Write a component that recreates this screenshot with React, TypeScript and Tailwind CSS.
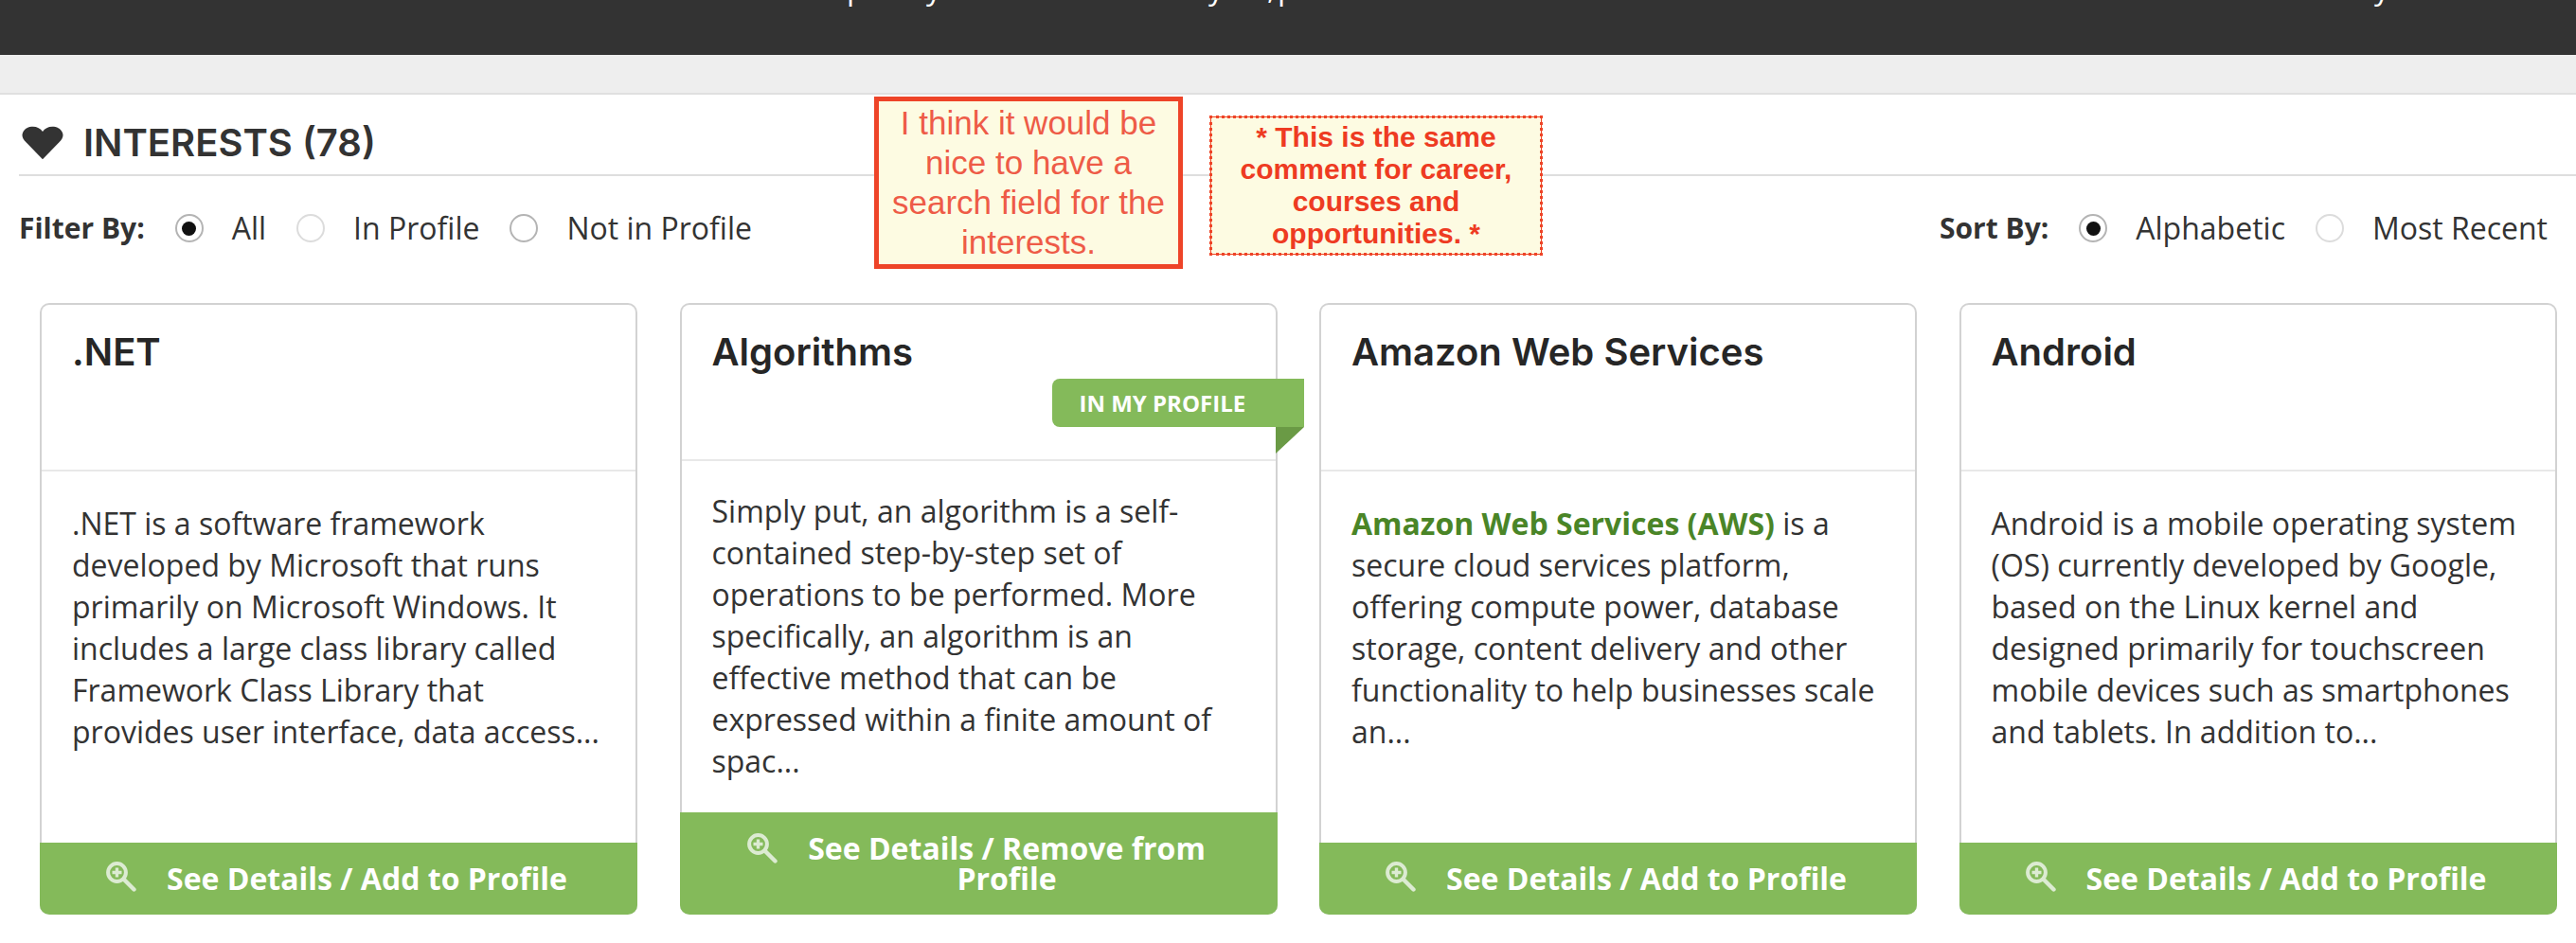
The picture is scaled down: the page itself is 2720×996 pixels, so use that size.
import React from "react";

const Heart = () => (
  <svg viewBox="0 0 24 24" className="w-[44px] h-[36px] shrink-0" preserveAspectRatio="none">
    <path d="M12 23.5 L2.6 11.6 C0.4 9 -0.2 6.8 0.6 4.6 C1.6 1.8 4 0.5 6.4 0.5 C8.8 0.5 10.8 1.8 12 4 C13.2 1.8 15.2 0.5 17.6 0.5 C20 0.5 22.4 1.8 23.4 4.6 C24.2 6.8 23.6 9 21.4 11.6 Z" fill="#333333" />
  </svg>
);

const Zoom = () => (
  <svg viewBox="0 0 32 32" className="w-[32px] h-[32px] shrink-0">
    <circle cx="11.5" cy="11.5" r="9.4" fill="none" stroke="#dcebd2" strokeWidth="4" />
    <path d="M6.5 11.5 H16.5 M11.5 6.5 V16.5" stroke="#dcebd2" strokeWidth="3.4" />
    <path d="M19 19 L29.5 29.5" stroke="#dcebd2" strokeWidth="4.4" strokeLinecap="round" />
  </svg>
);

const Radio = ({ on, light }: { on?: boolean; light?: boolean }) => (
  <span className={`flex items-center justify-center w-[30px] h-[30px] rounded-full border-2 bg-white shrink-0 ${light ? "border-[#dcdcdc]" : "border-[#b4b4b4]"}`}>
    {on && <span className="block w-[15px] h-[15px] rounded-full bg-[#111111]" />}
  </span>
);

const Option = ({ label, on, light }: { label: string; on?: boolean; light?: boolean }) => (
  <div className="flex items-center gap-[30px]">
    <Radio on={on} light={light} />
    <span>{label}</span>
  </div>
);

type CardProps = {
  title: string;
  body: React.ReactNode;
  inProfile?: boolean;
  action: string;
};

const Card = ({ title, body, inProfile, action }: CardProps) => (
  <div className="relative w-[631px] h-[646px] shrink-0 flex flex-col bg-white rounded-[10px] border-2 border-b-0 border-[#d2d2d2]">
    <div className={`shrink-0 px-[32px] pt-[25px] border-b-2 border-[#e8e8e8] ${inProfile ? "h-[165px]" : "h-[176px]"}`}>
      <h3 className="font-['Inter','Noto_Sans',sans-serif] font-semibold text-[40px] leading-[50px] text-[#262626]">{title}</h3>
    </div>
    {inProfile && (
      <div className="absolute top-[78px] right-[-30px]">
        <div className="flex items-center h-[51px] w-[266px] pl-[29px] bg-[#84ba5a] rounded-l-[8px] text-white font-bold text-[24px] font-['Open_Sans',sans-serif]">IN MY PROFILE</div>
        <svg viewBox="0 0 30 28" className="absolute right-0 top-[51px] w-[30px] h-[28px]">
          <path d="M0 0 H30 L0 28 Z" fill="#6a9a45" />
        </svg>
      </div>
    )}
    <div className={`flex-1 pl-[32px] pr-[32px] font-['Open_Sans',sans-serif] text-[32px] leading-[44px] text-[#333333] ${inProfile ? "pt-[31px]" : "pt-[33px]"}`}>{body}</div>
    <div className={`shrink-0 mx-[-2px] pr-[4px] rounded-b-[10px] bg-[#84ba5a] text-white font-['Open_Sans',sans-serif] font-bold text-[32px] leading-[32px] flex items-center justify-center gap-[32px] ${inProfile ? "h-[108px]" : "h-[76px]"}`}>
      {inProfile ? (
        <>
          <span className="self-start mt-[22px]"><Zoom /></span>
          <span className="text-center w-[420px]">{action}</span>
        </>
      ) : (
        <>
          <span className="mb-[4px]"><Zoom /></span>
          <span>{action}</span>
        </>
      )}
    </div>
  </div>
);

export default function App() {
  return (
    <div className="relative w-[2720px] h-[996px] overflow-hidden bg-white font-['Open_Sans',sans-serif] text-[#333333]">
      <header className="h-[58px] bg-[#333333] overflow-hidden">
        <div className="flex pl-[894px] -mt-[35px] text-[32px] leading-[44px] text-white whitespace-nowrap">
          <span className="w-[84px]">p</span>
          <span className="w-[298px]">y</span>
          <span className="w-[62px]">y</span>
          <span className="w-[11px]">,</span>
          <span className="w-[1158px]">p</span>
          <span>y</span>
        </div>
      </header>
      <div className="h-[42px] bg-[#eeeeee] border-b-2 border-[#e0e0e0]" />
      <section>
        <div className="ml-[20px] pl-[3px] mt-[28px] h-[58px] flex items-center gap-[21px] border-b-2 border-[#dedede] pb-[10px]">
          <Heart />
          <h2 className="font-['Inter','Noto_Sans',sans-serif] font-semibold text-[40px] leading-[46px] text-[#333333]">INTERESTS (78)</h2>
        </div>
        <div className="ml-[20px] mr-[30px] mt-[40px] h-[30px] flex items-center justify-between text-[32px] leading-[40px]">
          <div className="flex items-center gap-[32px]">
            <span className="font-bold text-[30px]">Filter By:</span>
            <Option label="All" on />
            <Option label="In Profile" light />
            <Option label="Not in Profile" />
          </div>
          <div className="flex items-center gap-[32px]">
            <span className="font-bold text-[30px]">Sort By:</span>
            <Option label="Alphabetic" on />
            <Option label="Most Recent" light />
          </div>
        </div>
        <div className="ml-[42px] mt-[64px] flex gap-[44.5px]">
          <Card title=".NET" action="See Details / Add to Profile" body=".NET is a software framework developed by Microsoft that runs primarily on Microsoft Windows. It includes a large class library called Framework Class Library that provides user interface, data access..." />
          <Card title="Algorithms" inProfile action="See Details / Remove from Profile" body="Simply put, an algorithm is a self-contained step-by-step set of operations to be performed. More specifically, an algorithm is an effective method that can be expressed within a finite amount of spac..." />
          <Card title="Amazon Web Services" action="See Details / Add to Profile" body={<><strong className="font-bold text-[#4a8527]">Amazon Web Services (AWS)</strong> is a secure cloud services platform, offering compute power, database storage, content delivery and other functionality to help businesses scale an...</>} />
          <Card title="Android" action="See Details / Add to Profile" body="Android is a mobile operating system (OS) currently developed by Google, based on the Linux kernel and designed primarily for touchscreen mobile devices such as smartphones and tablets. In addition to..." />
        </div>
      </section>
      <div className="absolute left-[923px] top-[102px] w-[326px] h-[182px] border-[5px] border-[#ee4428] bg-[#fdfbe2] text-center font-['Liberation_Sans',sans-serif] text-[#ee5b47] text-[35px] leading-[42px] flex items-center justify-center px-[10px]">
        <span>I think it would be nice to have a search field for the interests.</span>
      </div>
      <div className="absolute left-[1277px] top-[122px] w-[352px] h-[148px] border-[3px] border-dotted border-[#ee4428] outline-1 outline-[#ee4428] -outline-offset-2 bg-[#fdfbe2] text-center font-['Liberation_Sans',sans-serif] font-bold text-[#ee3b22] text-[30px] leading-[34px] flex items-center justify-center px-[20px]">
        <span>* This is the same comment for career, courses and opportunities. *</span>
      </div>
    </div>
  );
}
